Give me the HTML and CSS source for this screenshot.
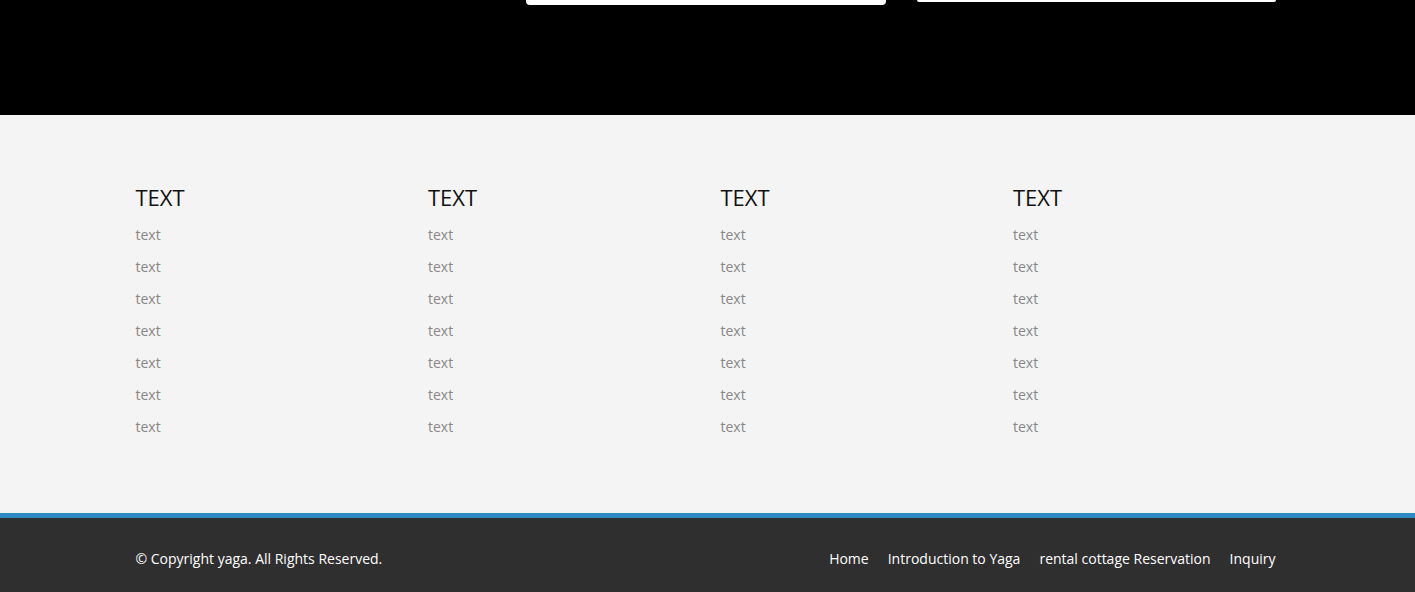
FILE: index.html
```html
<!DOCTYPE html>
<html lang="en">
<head>
<meta charset="utf-8">
<title>yaga</title>
<link rel="stylesheet" href="styles.css">
</head>
<body>
<section class="hero">
  <div class="container hero-row">
    <div class="field field-a"></div>
    <div class="field field-b"></div>
  </div>
</section>
<section class="links">
  <div class="cols">
    <div class="col">
      <h3>TEXT</h3>
      <ul><li>text</li><li>text</li><li>text</li><li>text</li><li>text</li><li>text</li><li>text</li></ul>
    </div>
    <div class="col">
      <h3>TEXT</h3>
      <ul><li>text</li><li>text</li><li>text</li><li>text</li><li>text</li><li>text</li><li>text</li></ul>
    </div>
    <div class="col">
      <h3>TEXT</h3>
      <ul><li>text</li><li>text</li><li>text</li><li>text</li><li>text</li><li>text</li><li>text</li></ul>
    </div>
    <div class="col">
      <h3>TEXT</h3>
      <ul><li>text</li><li>text</li><li>text</li><li>text</li><li>text</li><li>text</li><li>text</li></ul>
    </div>
  </div>
</section>
<footer class="footer">
  <div class="container foot-row">
    <p class="copy">© Copyright yaga. All Rights Reserved.</p>
    <nav class="foot-nav">
      <a href="#">Home</a>
      <a href="#">Introduction to Yaga</a>
      <a href="#">rental cottage Reservation</a>
      <a href="#">Inquiry</a>
    </nav>
  </div>
</footer>
</body>
</html>
```
FILE: styles.css
```css
* { box-sizing: border-box; }
html, body { margin: 0; padding: 0; }
body {
  font-family: "Open Sans", "Liberation Sans", sans-serif;
  background: #2f2f2f;
  overflow: hidden;
}
.container {
  width: 1140px;
  margin-left: calc(50% - 572px);
}
.hero {
  background: #000;
  height: 115px;
  overflow: hidden;
}
.hero-row {
  display: flex;
  justify-content: flex-end;
  align-items: flex-start;
  gap: 31px;
}
.field {
  background: #fff;
  border-radius: 0 0 4px 4px;
}
.field-a { width: 360px; height: 5px; }
.field-b { width: 359px; height: 2px; }
.links {
  background: #f4f4f4;
  padding: 67px 0 70px;
  border-bottom: 5px solid #2e8bc4;
}
.cols {
  display: grid;
  grid-template-columns: repeat(4, 1fr);
  width: 1170px;
  margin-left: calc(50% - 572px);
}
.col h3 {
  margin: 0 0 7px;
  font-size: 22px;
  line-height: 30px;
  font-weight: 400;
  color: #111;
}
.col ul {
  list-style: none;
  margin: 0;
  padding: 0;
}
.col li {
  font-size: 14px;
  line-height: 32px;
  color: #888;
}
.footer {
  background: #2f2f2f;
  height: 74px;
  padding-top: 31px;
}
.foot-row {
  display: flex;
  justify-content: space-between;
  align-items: center;
}
.copy {
  margin: 0;
  font-size: 14px;
  line-height: 20px;
  color: #fff;
}
.foot-nav {
  display: flex;
  gap: 19px;
}
.foot-nav a {
  color: #fff;
  text-decoration: none;
  font-size: 14px;
  line-height: 20px;
}
```
